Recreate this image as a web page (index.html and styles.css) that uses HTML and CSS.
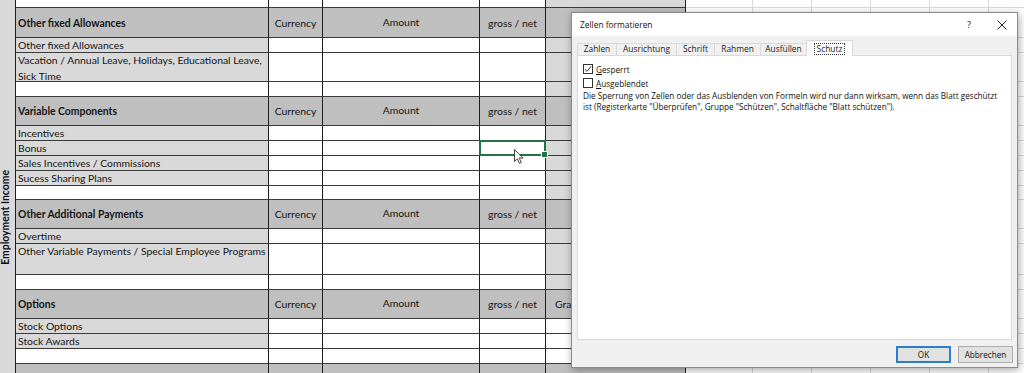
FILE: index.html
```html
<!DOCTYPE html>
<html lang="en">
<head>
<meta charset="utf-8">
<title>Zellen formatieren</title>
<link rel="stylesheet" href="styles.css">
</head>
<body>
<div class="sheet">
  <div class="side"><span class="side-label">Employment Income</span></div>
  <div class="rows">
    <div class="row h8"><div class="c"></div><div class="c"></div><div class="c"></div><div class="c"></div><div class="c lg"></div><div class="c g"></div><div class="c rest"></div></div>

    <div class="row h30"><div class="c hd t">Other fixed Allowances</div><div class="c hd ctr">Currency</div><div class="c hd ctr up">Amount</div><div class="c hd ctr">gross / net</div><div class="c hd"></div><div class="c g"></div><div class="c rest"></div></div>
    <div class="row h15"><div class="c lab">Other fixed Allowances</div><div class="c"></div><div class="c"></div><div class="c"></div><div class="c lg"></div><div class="c g"></div><div class="c rest"></div></div>
    <div class="row h29"><div class="c lab wrap">Vacation / Annual Leave, Holidays, Educational Leave,<br>Sick Time</div><div class="c"></div><div class="c"></div><div class="c"></div><div class="c lg"></div><div class="c g"></div><div class="c rest"></div></div>
    <div class="row h15"><div class="c"></div><div class="c"></div><div class="c"></div><div class="c"></div><div class="c lg"></div><div class="c g"></div><div class="c rest"></div></div>

    <div class="row h29"><div class="c hd t">Variable Components</div><div class="c hd ctr">Currency</div><div class="c hd ctr up">Amount</div><div class="c hd ctr">gross / net</div><div class="c hd"></div><div class="c g"></div><div class="c rest"></div></div>
    <div class="row h15"><div class="c lab">Incentives</div><div class="c"></div><div class="c"></div><div class="c"></div><div class="c lg"></div><div class="c g"></div><div class="c rest"></div></div>
    <div class="row h15"><div class="c lab">Bonus</div><div class="c"></div><div class="c"></div><div class="c sel"></div><div class="c lg"></div><div class="c g"></div><div class="c rest"></div></div>
    <div class="row h15"><div class="c lab">Sales Incentives / Commissions</div><div class="c"></div><div class="c"></div><div class="c"></div><div class="c lg"></div><div class="c g"></div><div class="c rest"></div></div>
    <div class="row h15"><div class="c lab">Sucess Sharing Plans</div><div class="c"></div><div class="c"></div><div class="c"></div><div class="c lg"></div><div class="c g"></div><div class="c rest"></div></div>
    <div class="row h14"><div class="c"></div><div class="c"></div><div class="c"></div><div class="c"></div><div class="c lg"></div><div class="c g"></div><div class="c rest"></div></div>

    <div class="row h29"><div class="c hd t">Other Additional Payments</div><div class="c hd ctr">Currency</div><div class="c hd ctr up">Amount</div><div class="c hd ctr">gross / net</div><div class="c hd"></div><div class="c g"></div><div class="c rest"></div></div>
    <div class="row h15"><div class="c lab">Overtime</div><div class="c"></div><div class="c"></div><div class="c"></div><div class="c lg"></div><div class="c g"></div><div class="c rest"></div></div>
    <div class="row h31"><div class="c lab">Other Variable Payments / Special Employee Programs</div><div class="c"></div><div class="c"></div><div class="c"></div><div class="c lg"></div><div class="c g"></div><div class="c rest"></div></div>
    <div class="row h15"><div class="c"></div><div class="c"></div><div class="c"></div><div class="c"></div><div class="c lg"></div><div class="c g"></div><div class="c rest"></div></div>

    <div class="row h29"><div class="c hd t">Options</div><div class="c hd ctr">Currency</div><div class="c hd ctr up">Amount</div><div class="c hd ctr">gross / net</div><div class="c hd lft">Grant Date</div><div class="c g"></div><div class="c rest"></div></div>
    <div class="row h15"><div class="c lab">Stock Options</div><div class="c"></div><div class="c"></div><div class="c"></div><div class="c"></div><div class="c g"></div><div class="c rest"></div></div>
    <div class="row h15"><div class="c lab">Stock Awards</div><div class="c"></div><div class="c"></div><div class="c"></div><div class="c"></div><div class="c g"></div><div class="c rest"></div></div>
    <div class="row h15"><div class="c"></div><div class="c"></div><div class="c"></div><div class="c"></div><div class="c"></div><div class="c g"></div><div class="c rest"></div></div>

    <div class="row h30"><div class="c hd"></div><div class="c hd"></div><div class="c hd"></div><div class="c hd"></div><div class="c hd"></div><div class="c g"></div><div class="c rest"></div></div>
  </div>
</div>

<svg class="cursor" width="12" height="17" viewBox="0 0 12 17" aria-hidden="true">
  <path d="M1.5 1.5 L1.5 13.5 L4.3 10.9 L6.4 15.4 L8.3 14.5 L6.2 10.1 L10 10.1 Z" fill="#fff" stroke="#444" stroke-width="1" stroke-linejoin="round"/>
</svg>

<div class="dialog">
  <div class="titlebar">
    <span class="title">Zellen formatieren</span>
    <span class="help">?</span>
    <svg class="close" width="10" height="10" viewBox="0 0 10 10" aria-hidden="true"><path d="M0.5 0.5 L9.5 9.5 M9.5 0.5 L0.5 9.5" stroke="#222" stroke-width="1"/></svg>
  </div>
  <div class="dbody">
    <div class="tabs">
      <div class="tab w39">Zahlen</div>
      <div class="tab w60">Ausrichtung</div>
      <div class="tab w38">Schrift</div>
      <div class="tab w46">Rahmen</div>
      <div class="tab w46">Ausfüllen</div>
      <div class="tab active w46"><span class="focus">Schutz</span></div>
    </div>
    <div class="panel">
      <div class="cb-row"><span class="cb"><svg width="8" height="8" viewBox="0 0 8 8" aria-hidden="true"><path d="M0.8 4.2 L3 6.3 L7.2 1.2" fill="none" stroke="#333" stroke-width="1"/></svg></span><span><u>G</u>esperrt</span></div>
      <div class="cb-row"><span class="cb"></span><span><u>A</u>usgeblendet</span></div>
      <p class="note">Die Sperrung von Zellen oder das Ausblenden von Formeln wird nur dann wirksam, wenn das Blatt geschützt<br>ist (Registerkarte "Überprüfen", Gruppe "Schützen", Schaltfläche "Blatt schützen").</p>
    </div>
    <div class="footer">
      <button class="btn ok" type="button">OK</button>
      <button class="btn" type="button">Abbrechen</button>
    </div>
  </div>
</div>
</body>
</html>
```

FILE: styles.css
```css
* { box-sizing: border-box; margin: 0; padding: 0; }

html, body {
  width: 1024px;
  height: 373px;
  overflow: hidden;
  background: #fff;
}

body {
  position: relative;
  font-family: Lato, "Liberation Sans", sans-serif;
  font-size: 10.4px;
  color: #141414;
}

/* ---------- spreadsheet ---------- */
.sheet {
  display: flex;
  align-items: stretch;
}

.side {
  width: 16px;
  flex: none;
  background: #d9d9d9;
  border-right: 1px solid #1e1e1e;
  display: flex;
  flex-direction: column;
  align-items: flex-start;
  overflow: hidden;
}

.side-label {
  writing-mode: vertical-rl;
  transform: rotate(180deg);
  font-weight: 700;
  line-height: 11px;
  margin-top: 170px;
  margin-left: 0;
  white-space: nowrap;
  color: #111;
}

.rows {
  display: flex;
  flex-direction: column;
}

.row {
  display: grid;
  grid-template-columns: 253px 54px 157px 66px 140px 67px 272px;
}

.h8 { height: 8px; }
.h14 { height: 14px; }
.h15 { height: 15px; }
.h29 { height: 29px; }
.h30 { height: 30px; }
.h31 { height: 31px; }

.c {
  border-right: 1px solid #1e1e1e;
  border-bottom: 1px solid #3a3a3a;
  white-space: nowrap;
  overflow: hidden;
  background: #fff;
}

.c.g {
  border-right-color: #dadada;
  border-bottom-color: #dadada;
}

.c.rest {
  border-right: none;
  border-bottom-color: #dadada;
  background: repeating-linear-gradient(to right, transparent 0 58px, #dadada 58px 59px);
}

.lab {
  background: #d9d9d9;
  padding-left: 2px;
  line-height: 14px;
}

.lab.wrap {
  line-height: 15.5px;
}

.lg { background: #d9d9d9; }

.hd {
  background: #bfbfbf;
  display: flex;
  align-items: center;
}

.hd.t {
  font-weight: 700;
  padding-left: 2px;
}

.hd.ctr { justify-content: center; }

.hd.up { padding-bottom: 2px; }

.hd.lft { padding-left: 9px; }

.sel { position: relative; overflow: visible; }

.sel::before {
  content: "";
  position: absolute;
  left: -1px;
  top: -1px;
  right: -1px;
  bottom: -1px;
  border: 2px solid #217346;
}

.sel::after {
  content: "";
  position: absolute;
  right: -3px;
  bottom: -3px;
  width: 5px;
  height: 5px;
  background: #217346;
  border: 1px solid #fff;
}

.cursor {
  position: absolute;
  left: 513px;
  top: 148px;
}

/* ---------- dialog ---------- */
.dialog {
  position: absolute;
  left: 571px;
  top: 12px;
  width: 447px;
  height: 356px;
  background: #f0f0f0;
  border: 1px solid #8a8a8a;
  box-shadow: 1px 2px 8px rgba(0, 0, 0, 0.35);
  display: flex;
  flex-direction: column;
  font-family: "Open Sans", "Noto Sans", sans-serif;
  font-size: 8.2px;
  color: #111;
}

.titlebar {
  height: 23px;
  flex: none;
  background: #fff;
  display: flex;
  align-items: center;
  padding-left: 8px;
}

.title {
  flex: 1;
  font-size: 8.4px;
}

.help {
  width: 10px;
  text-align: center;
  font-size: 9px;
  margin-right: 23px;
}

.close {
  margin-right: 10px;
}

.dbody {
  flex: 1;
  display: flex;
  flex-direction: column;
  padding: 5px 5px 0 5px;
}

.tabs {
  height: 14px;
  flex: none;
  display: flex;
  align-items: flex-end;
}

.tab {
  height: 12px;
  border: 1px solid #d9d9d9;
  border-bottom: none;
  margin-right: -1px;
  display: flex;
  align-items: center;
  justify-content: center;
  line-height: 1;
  color: #222;
  font-size: 8.4px;
}

.w38 { width: 39px; }
.w39 { width: 40px; }
.w46 { width: 47px; }
.w60 { width: 61px; }

.tab.active {
  height: 16px;
  margin-bottom: -1px;
  background: #fff;
  position: relative;
  z-index: 1;
  align-items: flex-start;
  padding-top: 2px;
}

.focus {
  border: 1px dotted #333;
  padding: 1px 2px;
  line-height: 1;
}

.panel {
  height: 285px;
  flex: none;
  background: #fff;
  border: 1px solid #d9d9d9;
  padding: 6px 5px;
}

.cb-row {
  height: 14px;
  display: flex;
  align-items: center;
  gap: 3px;
}

.cb {
  width: 10px;
  height: 10px;
  border: 1px solid #333;
  background: #fff;
  display: flex;
  align-items: center;
  justify-content: center;
}

.note {
  margin-top: 1px;
  line-height: 10.5px;
  white-space: nowrap;
}

.footer {
  display: flex;
  justify-content: flex-end;
  gap: 7px;
  padding-top: 6px;
  margin-right: -1px;
}

.btn {
  width: 55px;
  height: 17px;
  background: #e1e1e1;
  border: 1px solid #adadad;
  font-family: "Open Sans", "Noto Sans", sans-serif;
  font-size: 8.2px;
  color: #111;
}

.btn.ok {
  border: 2px solid #2a7fcc;
}
```
